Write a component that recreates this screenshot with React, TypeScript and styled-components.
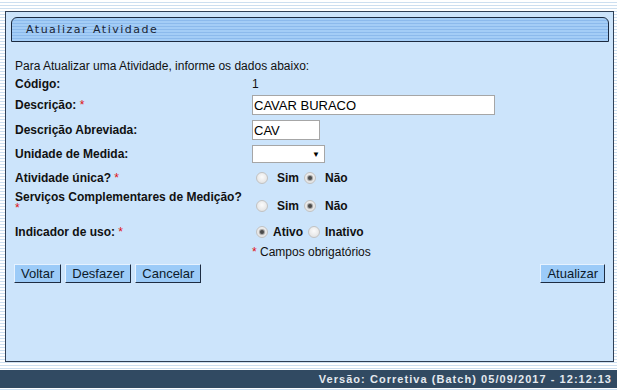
import React from 'react';
import styled, {createGlobalStyle} from "styled-components";

const GlobalStyle = createGlobalStyle`
    html, body {
        margin: 0;
        padding: 0;
    }
    body {
        width: 617px;
        height: 391px;
        overflow: hidden;
        font-family: "Liberation Sans", Arial, sans-serif;
        background: repeating-linear-gradient(to bottom, #ffffff 0 2px, #cddff0 2px 3px);
    }
`

type RowPropsType = {
    h: number
}

type RadioPropsType = {
    checked?: boolean
}

type RadioOptionType = {
    label: string
    checked?: boolean
    wide?: boolean
}

const RadioGroup = (props: { options: RadioOptionType[] }) => {
    return (
        <StyledRadioGroup>
            {props.options.map((o) => (
                <RadioItem key={o.label}>
                    <Radio checked={o.checked}/>
                    <RadioLabel wide={o.wide}>{o.label}</RadioLabel>
                </RadioItem>
            ))}
        </StyledRadioGroup>
    );
};

export default function App() {
    return (
        <>
            <GlobalStyle/>
            <Page>
                <Panel>
                    <HeaderBar>
                        <Title>Atualizar Atividade</Title>
                    </HeaderBar>

                    <Form>
                        <Intro>Para Atualizar uma Atividade, informe os dados abaixo:</Intro>

                        <Row h={20}>
                            <Label>Código:</Label>
                            <Value>1</Value>
                        </Row>

                        <Row h={22}>
                            <Label>Descrição: <Req>*</Req></Label>
                            <TextInput width={243} defaultValue="CAVAR BURACO"/>
                        </Row>

                        <Row h={28}>
                            <Label>Descrição Abreviada:</Label>
                            <TextInput width={68} defaultValue="CAV"/>
                        </Row>

                        <Row h={20}>
                            <Label>Unidade de Medida:</Label>
                            <Select>
                                <Arrow>▼</Arrow>
                            </Select>
                        </Row>

                        <Row h={28}>
                            <Label>Atividade única? <Req>*</Req></Label>
                            <RadioGroup options={[
                                {label: "Sim", wide: true},
                                {label: "Não", checked: true, wide: true},
                            ]}/>
                        </Row>

                        <Row h={28}>
                            <TopLabel>
                                <LabelLine>Serviços Complementares de Medição?</LabelLine>
                                <LabelLine><Req>*</Req></LabelLine>
                            </TopLabel>
                            <RadioGroup options={[
                                {label: "Sim", wide: true},
                                {label: "Não", checked: true, wide: true},
                            ]}/>
                        </Row>

                        <Row h={24}>
                            <Label>Indicador de uso: <Req>*</Req></Label>
                            <RadioGroup options={[
                                {label: "Ativo", checked: true},
                                {label: "Inativo"},
                            ]}/>
                        </Row>

                        <Row h={16}>
                            <Label/>
                            <Note><Req>*</Req> Campos obrigatórios</Note>
                        </Row>

                        <ButtonRow>
                            <ButtonGroup>
                                <Button>Voltar</Button>
                                <Button>Desfazer</Button>
                                <Button>Cancelar</Button>
                            </ButtonGroup>
                            <Button>Atualizar</Button>
                        </ButtonRow>
                    </Form>
                </Panel>

                <Footer>Versão: Corretiva (Batch) 05/09/2017 - 12:12:13</Footer>
            </Page>
        </>
    );
}

const Page = styled.div`
    padding: 11px 3px 0 5px;
`

const Panel = styled.div`
    height: 344px;
    border: 1px solid #2f3f55;
    background-color: #cce4fb;
    padding: 5px 4px 0 5px;
`

const HeaderBar = styled.div`
    height: 23px;
    border: 1px solid #1b2a40;
    border-radius: 6px 6px 0 0;
    background: repeating-linear-gradient(to bottom, #a4cdf6 0 2px, #8cbaec 2px 3px);
    display: flex;
    align-items: center;
    padding-left: 14px;
`

const Title = styled.span`
    font-family: "DejaVu Sans", Verdana, sans-serif;
    font-size: 11px;
    letter-spacing: 1.5px;
    color: #1a2535;
`

const Form = styled.div`
    padding: 16px 4px 0 3px;
    font-size: 12px;
    color: #111;
`

const Intro = styled.div`
    height: 16px;
    display: flex;
    align-items: center;
    padding-left: 1px;
`

const Row = styled.div<RowPropsType>`
    height: ${props => props.h}px;
    display: flex;
    align-items: center;
`

const Label = styled.div`
    width: 237px;
    padding-left: 1px;
    flex-shrink: 0;
    font-weight: bold;
`

const TopLabel = styled(Label)`
    align-self: flex-start;
    display: flex;
    flex-direction: column;
`

const LabelLine = styled.span`
    display: block;
    line-height: 11px;
`

const Req = styled.span`
    color: #e01010;
    font-weight: normal;
`

const Value = styled.span`
    font-size: 12px;
`

const TextInput = styled.input<{ width: number }>`
    box-sizing: border-box;
    width: ${props => props.width}px;
    height: 20px;
    border: 1px solid #a6a6a6;
    background: #fff;
    font-family: "Liberation Sans", Arial, sans-serif;
    font-size: 13px;
    color: #000;
    padding: 0 1px;
    outline: none;
`

const Select = styled.div`
    box-sizing: border-box;
    width: 73px;
    height: 18px;
    border: 1px solid #a6a6a6;
    background: #fff;
    display: flex;
    align-items: center;
    justify-content: flex-end;
    padding-right: 4px;
`

const Arrow = styled.span`
    font-size: 8px;
    color: #000;
`

const StyledRadioGroup = styled.div`
    display: flex;
    align-items: center;
    padding-left: 4px;
    gap: 2px;
`

const RadioItem = styled.label`
    display: flex;
    align-items: center;
`

const Radio = styled.span<RadioPropsType>`
    box-sizing: border-box;
    width: 12px;
    height: 12px;
    border-radius: 50%;
    border: 1px solid #c2c2c2;
    background: radial-gradient(circle at 50% 40%, #fbfbfb 0, #e6e6e6 70%, #dadada 100%);
    display: flex;
    align-items: center;
    justify-content: center;

    &::after {
        content: "";
        display: ${props => props.checked ? "block" : "none"};
        width: 4px;
        height: 4px;
        border-radius: 50%;
        background: #4a4a4a;
        box-shadow: 0 0 1px 1px #9a9a9a;
    }
`

const RadioLabel = styled.span<{ wide?: boolean }>`
    font-weight: bold;
    margin-left: ${props => props.wide ? "9px" : "5px"};
    margin-right: 3px;
`

const Note = styled.span`
    font-size: 12px;
`

const ButtonRow = styled.div`
    margin-top: 4px;
    display: flex;
    justify-content: space-between;
`

const ButtonGroup = styled.div`
    display: flex;
    gap: 4px;
`

const Button = styled.button`
    height: 19px;
    min-width: 46px;
    padding: 0 6px;
    font-family: "Liberation Sans", Arial, sans-serif;
    font-size: 13px;
    color: #0d1a2a;
    background: #9ccbf8;
    border-style: solid;
    border-width: 1px;
    border-color: #e6f2ff #1d2c42 #1d2c42 #e6f2ff;
    line-height: 17px;
    cursor: pointer;
`

const Footer = styled.div`
    margin: 8px -3px 0 -5px;
    height: 18px;
    background: #314a62;
    color: #e4e9ef;
    font-size: 11px;
    font-weight: bold;
    letter-spacing: 1.05px;
    display: flex;
    align-items: center;
    justify-content: flex-end;
    padding-right: 5px;
`
